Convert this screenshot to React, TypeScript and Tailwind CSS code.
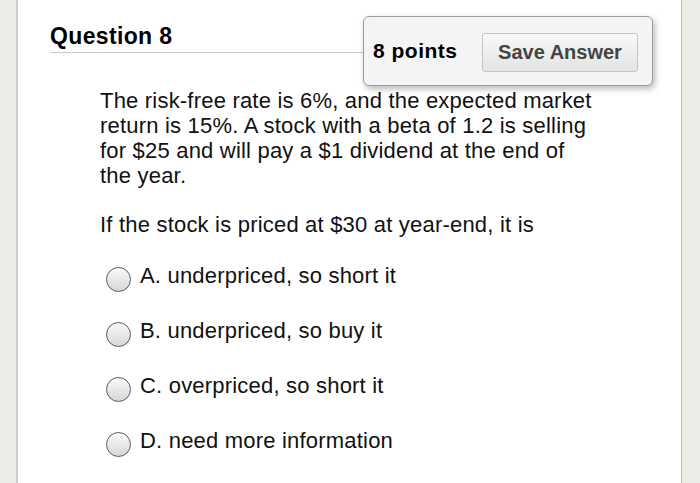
const options = [
  'A. underpriced, so short it',
  'B. underpriced, so buy it',
  'C. overpriced, so short it',
  'D. need more information',
]

export default function App() {
  return (
    <div className="flex h-[483px] w-[700px] overflow-hidden bg-white font-['Liberation_Sans',Arial,sans-serif] text-[#111]">
      {/* left margin strip */}
      <div className="w-[18px] shrink-0 border-r-2 border-[#cfcdc6] bg-[#ecebe5]"></div>

      <div className="relative flex-1 bg-white">
        {/* header */}
        <div className="ml-[32px] w-[520px] border-b border-[#c8c8c8] pt-[22px] pb-[2px]">
          <h1 className="text-[23px] leading-[28px] font-bold tracking-[0.35px] text-black">Question 8</h1>
        </div>

        {/* points + save box */}
        <div className="absolute left-[345px] top-[16px] flex h-[70px] w-[290px] items-center rounded-[6px] border border-[#9c9c9c] bg-[#f4f4f4] pl-[9px] pr-[14px] shadow-[2px_3px_6px_rgba(0,0,0,0.28)]">
          <span className="text-[21px] font-bold tracking-[0.5px] text-black">8 points</span>
          <button className="ml-auto mt-[2px] h-[39px] w-[156px] rounded-[3px] border border-[#c6c6c6] bg-gradient-to-b from-[#f9f9f9] to-[#e3e3e3] text-[20px] font-bold text-[#444]">
            Save Answer
          </button>
        </div>

        {/* question body */}
        <div className="ml-[82px] mt-[35px] w-[496px] text-[22px] leading-[25px] tracking-[0.2px]">
          <p>
            The risk-free rate is 6%, and the expected market return is 15%. A stock with a beta of 1.2 is selling for $25 and will pay a $1 dividend at the end of the year.
          </p>
          <p className="mt-[24px]">If the stock is priced at $30 at year-end, it is</p>
        </div>

        {/* answers */}
        <div className="ml-[88px] mt-[26px] flex flex-col gap-[30px]">
          {options.map(opt => (
            <label key={opt} className="relative flex h-[25px] items-start pl-[34px] text-[22px] leading-[25px] tracking-[0.2px]">
              <span className="absolute left-0 top-[4px] h-[25px] w-[25px] rounded-full border border-[#5a5a5a] bg-gradient-to-b from-[#fbfbfb] to-[#d6d6d6]"></span>
              <span>{opt}</span>
            </label>
          ))}
        </div>
      </div>

      {/* right margin strip */}
      <div className="w-[19px] shrink-0 border-l border-[#bdbcb6] bg-[#ecebe5]"></div>
    </div>
  )
}
